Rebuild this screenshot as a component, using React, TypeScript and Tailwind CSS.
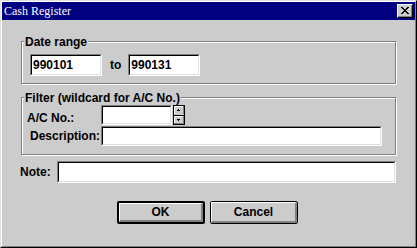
import React from 'react';

const sans = "font-['Liberation_Sans',Arial,sans-serif]";

function Field({ className = '', value = '' }: { className?: string; value?: string }) {
  return (
    <div
      className={`border border-t-[#808080] border-l-[#808080] border-r-white border-b-white ${className}`}
    >
      <div className="h-full border border-t-black border-l-black border-r-[#e0e0e0] border-b-[#e0e0e0] bg-white flex items-center pl-[1px] text-[12px] leading-[14px] font-bold text-black">
        {value}
      </div>
    </div>
  );
}

function GroupBox({
  label,
  className = '',
  children,
}: {
  label: string;
  className?: string;
  children: React.ReactNode;
}) {
  return (
    <div
      className={`relative border border-[#808080] shadow-[inset_1px_1px_0_#fff,1px_1px_0_#fff] ${className}`}
    >
      <span className="absolute -top-[7px] left-[2px] px-[1px] bg-[#cccccc] text-[12px] leading-[14px] font-bold text-black">
        {label}
      </span>
      {children}
    </div>
  );
}

function CloseButton() {
  const px = [
    '11....11',
    '.11..11.',
    '..1111..',
    '...11...',
    '..1111..',
    '.11..11.',
    '11....11',
  ];
  return (
    <div className="w-[16px] h-[14px] bg-[#cccccc] border border-t-white border-l-white border-r-black border-b-black">
      <div className="w-full h-full border-r border-b border-[#808080] flex items-center justify-center">
        <svg width="8" height="7" viewBox="0 0 8 7" shapeRendering="crispEdges">
          {px.flatMap((row, y) =>
            row.split('').map((c, x) =>
              c === '1' ? <rect key={`${x}-${y}`} x={x} y={y} width="1" height="1" fill="#000" /> : null
            )
          )}
        </svg>
      </div>
    </div>
  );
}

function Spinner() {
  return (
    <svg width="12" height="20" viewBox="0 0 12 20" shapeRendering="crispEdges" className="ml-[1px]">
      <rect x="0" y="0" width="12" height="20" fill="#cccccc" />
      <rect x="0" y="0" width="12" height="1" fill="#000" />
      <rect x="0" y="19" width="12" height="1" fill="#000" />
      <rect x="0" y="0" width="1" height="20" fill="#000" />
      <rect x="11" y="0" width="1" height="20" fill="#000" />
      <rect x="0" y="9.5" width="12" height="1" fill="#000" />
      <rect x="1" y="1" width="9" height="1" fill="#fff" />
      <rect x="1" y="1" width="1" height="8" fill="#fff" />
      <rect x="10" y="1" width="1" height="8" fill="#808080" />
      <rect x="1" y="11" width="9" height="1" fill="#fff" />
      <rect x="1" y="11" width="1" height="7" fill="#fff" />
      <rect x="10" y="11" width="1" height="8" fill="#808080" />
      <rect x="1" y="18" width="10" height="1" fill="#808080" />
      <rect x="5" y="4" width="1" height="1" fill="#000" />
      <rect x="4" y="5" width="3" height="1" fill="#000" />
      <rect x="4" y="14" width="3" height="1" fill="#000" />
      <rect x="5" y="15" width="1" height="1" fill="#000" />
    </svg>
  );
}

function Button({ label, isDefault = false }: { label: string; isDefault?: boolean }) {
  return (
    <div
      className={`w-[88px] h-[23px] rounded-[2px] border-black ${isDefault ? 'border-2' : 'border'}`}
    >
      <div className="w-full h-full border-t border-l border-white border-r-2 border-b-2 border-r-[#808080] border-b-[#808080] bg-[#cccccc] flex items-center justify-center text-[12px] leading-[14px] font-bold text-black">
        {label}
      </div>
    </div>
  );
}

export default function App() {
  return (
    <div className="w-[417px] h-[248px] bg-[#cccccc] border border-t-[#dfdfdf] border-l-[#dfdfdf] border-r-black border-b-black">
      <div className={`h-full flex flex-col border border-t-white border-l-white border-r-[#808080] border-b-[#808080] ${sans}`}>
        <div className="h-[18px] bg-[#000080] flex items-center justify-between pl-[2px] pr-[2px]">
          <span className="font-['Liberation_Serif','Times_New_Roman',serif] text-[12px] leading-[14px] text-white">
            Cash Register
          </span>
          <CloseButton />
        </div>

        <GroupBox label="Date range" className="mt-[21px] mx-[19px] pt-[12px] pb-[7px] pl-[8px]">
          <div className="flex items-center">
            <Field className="w-[72px] h-[22px]" value="990101" />
            <span className="ml-[8px] text-[12px] leading-[14px] font-bold">to</span>
            <Field className="ml-[7px] w-[72px] h-[22px]" value="990131" />
          </div>
        </GroupBox>

        <GroupBox
          label="Filter (wildcard for A/C No.)"
          className="mt-[13px] mx-[19px] pt-[7px] pb-[8px]"
        >
          <div className="flex items-center pl-[5px]">
            <span className="w-[74px] pt-[5px] text-[12px] leading-[14px] font-bold">A/C No.:</span>
            <Field className="w-[71px] h-[20px]" />
            <Spinner />
          </div>
          <div className="flex items-center pl-[8px] mt-[1px]">
            <span className="w-[71px] text-[12px] leading-[14px] font-bold">Description:</span>
            <Field className="w-[281px] h-[20px]" />
          </div>
        </GroupBox>

        <div className="mt-[6px] flex items-center pl-[18px]">
          <span className="w-[37px] text-[12px] leading-[14px] font-bold">Note:</span>
          <Field className="w-[339px] h-[22px]" />
        </div>

        <div className="mt-[18px] flex justify-center gap-[5px] pr-[2px]">
          <Button label="OK" isDefault />
          <Button label="Cancel" />
        </div>
      </div>
    </div>
  );
}
